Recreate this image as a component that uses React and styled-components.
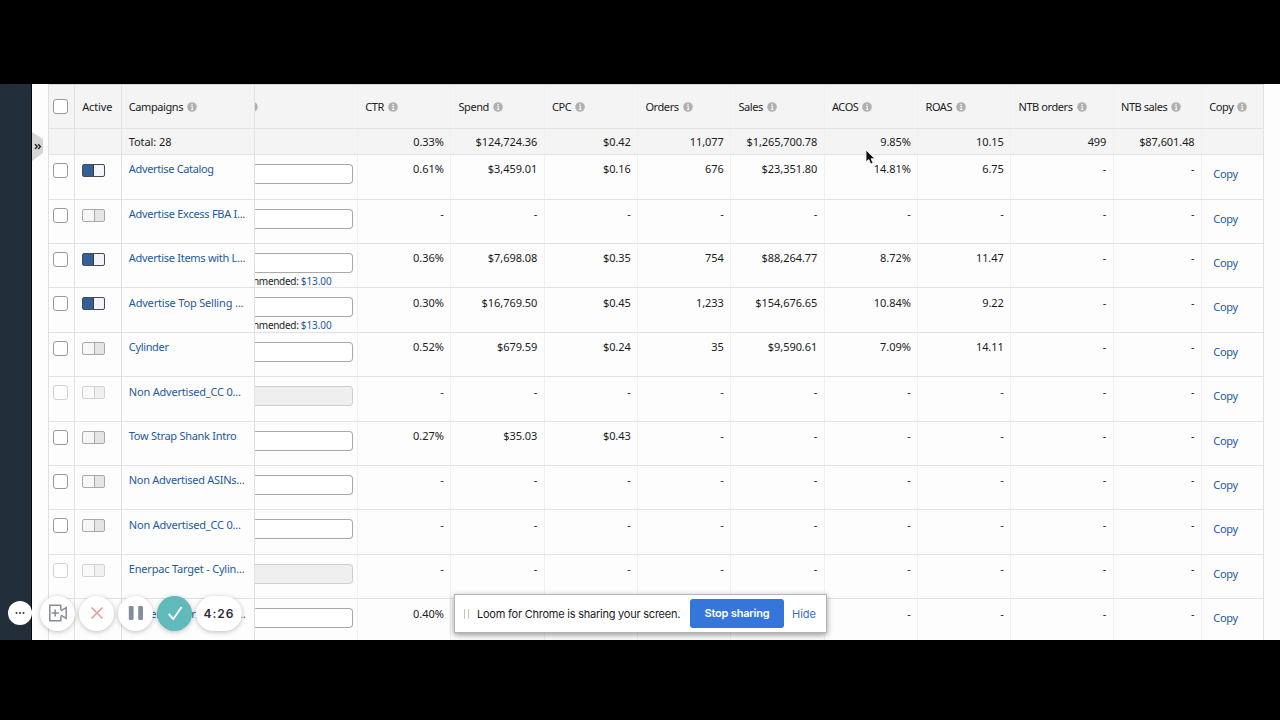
import React from "react";
import styled, { createGlobalStyle, css } from "styled-components";

const columns = [
  "CTR",
  "Spend",
  "CPC",
  "Orders",
  "Sales",
  "ACOS",
  "ROAS",
  "NTB orders",
  "NTB sales",
];

const totals = [
  "0.33%",
  "$124,724.36",
  "$0.42",
  "11,077",
  "$1,265,700.78",
  "9.85%",
  "10.15",
  "499",
  "$87,601.48",
];

const empty = ["-", "-", "-", "-", "-", "-", "-", "-", "-"];

const campaigns = [
  {
    name: "Advertise Catalog",
    on: true,
    spacing: -0.34,
    values: ["0.61%", "$3,459.01", "$0.16", "676", "$23,351.80", "14.81%", "6.75", "-", "-"],
  },
  { name: "Advertise Excess FBA I...", values: empty },
  {
    name: "Advertise Items with L...",
    on: true,
    bid: "$13.00",
    values: ["0.36%", "$7,698.08", "$0.35", "754", "$88,264.77", "8.72%", "11.47", "-", "-"],
  },
  {
    name: "Advertise Top Selling ...",
    on: true,
    spacing: -0.18,
    bid: "$13.00",
    values: ["0.30%", "$16,769.50", "$0.45", "1,233", "$154,676.65", "10.84%", "9.22", "-", "-"],
  },
  {
    name: "Cylinder",
    spacing: -0.34,
    values: ["0.52%", "$679.59", "$0.24", "35", "$9,590.61", "7.09%", "14.11", "-", "-"],
  },
  { name: "Non Advertised_CC 0...", spacing: -0.2, disabled: true, values: empty },
  {
    name: "Tow Strap Shank Intro",
    values: ["0.27%", "$35.03", "$0.43", "-", "-", "-", "-", "-", "-"],
  },
  { name: "Non Advertised ASINs...", values: empty },
  { name: "Non Advertised_CC 0...", spacing: -0.2, values: empty },
  { name: "Enerpac Target - Cylin...", spacing: -0.2, disabled: true, values: empty },
  {
    name: "Power Movers Intro L...",
    spacing: -0.1,
    values: ["0.40%", "", "", "", "", "-", "-", "-", "-"],
  },
];

const Info = () => (
  <InfoIcon viewBox="0 0 10 10">
    <circle cx="5" cy="5" r="4.8" fill="#b0b0b0" />
    <path d="M4 4.3H5.3V7.4M3.9 7.5H6.4" stroke="#f4f4f4" strokeWidth="1.1" fill="none" />
    <circle cx="5" cy="2.6" r="0.75" fill="#f4f4f4" />
  </InfoIcon>
);

const CampaignRow = ({ item }) => (
  <Row>
    <CheckCell>
      <Checkbox $disabled={item.disabled} />
    </CheckCell>
    <ToggleCell>
      <Toggle $on={item.on} $disabled={item.disabled} />
    </ToggleCell>
    <NameCell $spacing={item.spacing}>
      <Link>{item.name}</Link>
    </NameCell>
    <BidCell>
      <BidInput $disabled={item.disabled} />
      {item.bid && (
        <Recommended>
          nmended: <Link>{item.bid}</Link>
        </Recommended>
      )}
    </BidCell>
    {item.values.map((value, i) => (
      <ValueCell key={i}>{value}</ValueCell>
    ))}
    <CopyCell>
      <Link>Copy</Link>
    </CopyCell>
  </Row>
);

const App = () => {
  return (
    <>
      <GlobalStyle />
      <Stage>
        <Screen>
          <Sidebar />
          <Gutter>
            <ExpandTab>
              <svg width="11" height="29" viewBox="0 0 11 29">
                <path d="M0 0L11 7V21L0 29Z" fill="#d6d6d6" />
                <path
                  d="M3 12.2L5.2 14.6L3 17M6.2 12.2L8.4 14.6L6.2 17"
                  stroke="#222"
                  strokeWidth="1.4"
                  fill="none"
                />
              </svg>
            </ExpandTab>
          </Gutter>
          <Table>
            <HeaderRow>
              <HeadCell $center>
                <Checkbox />
              </HeadCell>
              <HeadCell $wide>Active</HeadCell>
              <HeadCell>
                Campaigns
                <Info />
              </HeadCell>
              <HeadCell $clip>
                <Info />
              </HeadCell>
              {columns.map((name) => (
                <HeadCell key={name}>
                  {name}
                  <Info />
                </HeadCell>
              ))}
              <HeadCell>
                Copy
                <Info />
              </HeadCell>
            </HeaderRow>
            <TotalRow>
              <TotalCell />
              <TotalCell />
              <TotalCell $left>Total: 28</TotalCell>
              <TotalCell />
              {totals.map((value, i) => (
                <TotalCell key={i}>{value}</TotalCell>
              ))}
              <TotalCell />
            </TotalRow>
            {campaigns.map((item, i) => (
              <CampaignRow key={i} item={item} />
            ))}
          </Table>
        </Screen>

        <Cursor width="12" height="18" viewBox="0 0 12 18">
          <path
            d="M1 1V13L3.8 10.5L5.7 15L8 14L6.1 9.7H9.8Z"
            fill="#111"
            stroke="#fff"
            strokeWidth="0.8"
          />
        </Cursor>

        <Recorder>
          <MoreButton>
            <svg width="12" height="4" viewBox="0 0 12 4">
              <circle cx="2.5" cy="2" r="1" fill="#333" />
              <circle cx="6" cy="2" r="1" fill="#333" />
              <circle cx="9.5" cy="2" r="1" fill="#333" />
            </svg>
          </MoreButton>
          <RoundButton>
            <svg width="20" height="20" viewBox="0 0 20 20" fill="none" stroke="#848d99" strokeWidth="1.5">
              <path d="M12.8 6.8V2.2H1.8V17.8H12.8V13.2" />
              <path d="M12.8 7.8L18.2 4.6V15.4L12.8 12.2" />
              <path d="M7.2 6.4V13.6M3.6 10H10.8" />
            </svg>
          </RoundButton>
          <RoundButton>
            <svg width="14" height="14" viewBox="0 0 14 14">
              <path d="M1.5 1.5L12.5 12.5M12.5 1.5L1.5 12.5" stroke="#e79c98" strokeWidth="1.6" />
            </svg>
          </RoundButton>
          <RoundButton>
            <svg width="16" height="16" viewBox="0 0 16 16" fill="#848d99">
              <rect x="0.8" y="1" width="4.8" height="14" rx="1.2" />
              <rect x="10.2" y="1" width="4.8" height="14" rx="1.2" />
            </svg>
          </RoundButton>
          <RoundButton $teal>
            <svg width="18" height="18" viewBox="0 0 18 18">
              <path d="M2.7 10L7.3 15L15.6 3" stroke="#fff" strokeWidth="1.9" fill="none" />
            </svg>
          </RoundButton>
          <Timer>4:26</Timer>
        </Recorder>

        <ShareBar>
          <Grip />
          <ShareText>Loom for Chrome is sharing your screen.</ShareText>
          <StopButton>Stop sharing</StopButton>
          <HideLink>Hide</HideLink>
        </ShareBar>
      </Stage>
    </>
  );
};

export default App;

const GlobalStyle = createGlobalStyle`
  * {
    box-sizing: border-box;
  }
  body {
    margin: 0;
    background: #000;
  }
`;

const Stage = styled.div`
  position: relative;
  width: 1280px;
  height: 720px;
  padding: 84px 0 80px;
  background: #000;
  overflow: hidden;
  font-family: "Noto Sans", "Open Sans", sans-serif;
  font-size: 11px;
  color: #1b1b1b;
`;

const Screen = styled.div`
  display: flex;
  height: 556px;
  background: #fdfdfd;
  overflow: hidden;
`;

const Sidebar = styled.div`
  width: 32px;
  background: #222e39;
  border-right: 1px solid #05080a;
`;

const Gutter = styled.div`
  width: 16px;
`;

const ExpandTab = styled.div`
  height: 29px;
  margin-top: 48px;
`;

const Table = styled.div`
  width: 1216px;
  height: 600px;
  border-left: 1px solid #e0e0e0;
`;

const Row = styled.div`
  display: grid;
  grid-template-columns: 26.2px 46.6px 133.2px 103.3px 93.2px 93.5px 93.5px 93px 93.5px 93.5px 93px 102.5px 88.3px 61.7px;
  grid-template-rows: 100%;
  height: 44.42px;
  border-bottom: 1px solid #e2e2e2;
`;

const HeaderRow = styled(Row)`
  height: 45px;
  background: #f4f4f4;
  border-top: 1px solid #d5d5d5;
`;

const TotalRow = styled(Row)`
  height: 26.2px;
  background: #f4f4f4;
`;

const Cell = styled.div`
  min-width: 0;
  overflow: hidden;
  white-space: nowrap;
  border-right: 1px solid #f0f0f0;
  line-height: 16px;

  &:nth-child(-n + 3),
  &:last-child {
    border-right-color: #e2e2e2;
  }
`;

const HeadCell = styled(Cell)`
  display: flex;
  align-items: center;
  gap: 4px;
  padding-left: 7px;
  letter-spacing: ${({ $wide }) => ($wide ? "-0.15px" : "-0.42px")};
  ${({ $center }) => $center && "padding-left: 4px;"}
  ${({ $clip }) =>
    $clip &&
    css`
      padding-left: 0;
      svg {
        margin-left: -7px;
      }
    `}
`;

const InfoIcon = styled.svg`
  width: 10px;
  height: 10px;
  flex-shrink: 0;
`;

const TotalCell = styled(Cell)`
  padding: 5px 6.7px 5px 7px;
  letter-spacing: -0.08px;
  text-align: ${({ $left }) => ($left ? "left" : "right")};
`;

const CheckCell = styled(Cell)`
  padding: 8px 0 0 4px;
`;

const Checkbox = styled.div`
  width: 15px;
  height: 15px;
  border: 1px solid ${({ $disabled }) => ($disabled ? "#d2d2d2" : "#999")};
  border-radius: 3px;
  background: #fff;
`;

const ToggleCell = styled(Cell)`
  padding: 9px 0 0 7px;
`;

const Toggle = styled.div`
  width: 23px;
  height: 13px;
  border: 1px solid ${({ $on }) => ($on ? "#454b55" : "#a9a9a9")};
  border-radius: 2px;
  background: ${({ $on }) =>
    $on
      ? "linear-gradient(90deg, #356095 10px, #333c48 10px, #333c48 11px, #f3f4fa 11px)"
      : "linear-gradient(90deg, #f7f7f7 11px, #a9a9a9 11px, #a9a9a9 12px, #e5e5e5 12px)"};
  opacity: ${({ $disabled }) => ($disabled ? 0.5 : 1)};
`;

const NameCell = styled(Cell)`
  padding: 6.3px 0 0 7px;
  letter-spacing: ${({ $spacing }) => $spacing ?? -0.28}px;
`;

const Link = styled.span`
  color: #1c5a9f;
`;

const BidCell = styled(Cell)`
  padding-top: 9px;
`;

const BidInput = styled.div`
  width: 99px;
  height: 20px;
  margin-left: -1px;
  border: 1px solid ${({ $disabled }) => ($disabled ? "#cfcfcf" : "#a9a9a9")};
  border-left: 0;
  border-radius: 0 4px 4px 0;
  background: ${({ $disabled }) => ($disabled ? "#efefef" : "#fff")};
`;

const Recommended = styled.div`
  margin-left: -2px;
  font-size: 10px;
  line-height: 17px;
  letter-spacing: -0.3px;

  ${Link} {
    letter-spacing: -0.1px;
  }
`;

const ValueCell = styled(Cell)`
  padding: 6.3px 6.7px 0 0;
  letter-spacing: -0.05px;
  text-align: right;
`;

const CopyCell = styled(Cell)`
  padding: 11px 0 0 11px;
  letter-spacing: -0.3px;
`;

const Cursor = styled.svg`
  position: absolute;
  left: 865px;
  top: 149px;
`;

const Recorder = styled.div`
  position: absolute;
  left: 8px;
  top: 595.5px;
  display: flex;
  align-items: center;
  gap: 4px;
`;

const MoreButton = styled.div`
  display: flex;
  align-items: center;
  justify-content: center;
  width: 24px;
  height: 24px;
  margin-right: 4px;
  border-radius: 50%;
  background: #fff;
`;

const RoundButton = styled.div`
  display: flex;
  align-items: center;
  justify-content: center;
  width: 35px;
  height: 35px;
  border-radius: 50%;
  background: ${({ $teal }) => ($teal ? "#5fbab9" : "#fff")};
  box-shadow: 0 1px 5px rgba(0, 0, 0, 0.25);
`;

const Timer = styled.div`
  width: 46px;
  height: 35px;
  border-radius: 18px;
  background: #fff;
  box-shadow: 0 1px 5px rgba(0, 0, 0, 0.25);
  color: #2c2c34;
  font: 600 12px/35px Inter, sans-serif;
  letter-spacing: 1px;
  text-align: center;
`;

const ShareBar = styled.div`
  position: absolute;
  left: 454px;
  top: 594px;
  display: flex;
  align-items: center;
  width: 373px;
  height: 39px;
  padding-left: 9px;
  border: 1px solid #b4b4b4;
  background: #fff;
  box-shadow: 0 2px 6px rgba(0, 0, 0, 0.4);
  font-family: Inter, sans-serif;
`;

const Grip = styled.div`
  width: 5px;
  height: 10px;
  border: solid #c4c4c4;
  border-width: 0 1px;
`;

const ShareText = styled.div`
  width: 213px;
  margin-left: 8px;
  font-size: 11px;
  letter-spacing: -0.23px;
  white-space: nowrap;
`;

const StopButton = styled.div`
  width: 94px;
  height: 29px;
  border-radius: 3px;
  background: #3675da;
  color: #fff;
  font-size: 11px;
  font-weight: 600;
  letter-spacing: -0.18px;
  line-height: 29px;
  text-align: center;
`;

const HideLink = styled.div`
  margin-left: 8px;
  color: #3471bd;
  font-size: 11px;
`;
